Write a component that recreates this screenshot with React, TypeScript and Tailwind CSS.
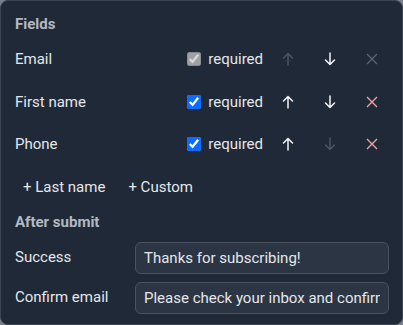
import React from "react";

interface Field {
  name: string;
  locked: boolean;
  canUp: boolean;
  canDown: boolean;
}

const fields: Field[] = [
  { name: "Email", locked: true, canUp: false, canDown: true },
  { name: "First name", locked: false, canUp: true, canDown: true },
  { name: "Phone", locked: false, canUp: true, canDown: false },
];

const Arrow: React.FC<{ up: boolean }> = ({ up }) => (
  <svg
    width="12"
    height="14"
    viewBox="0 0 12 14"
    fill="none"
    stroke="currentColor"
    strokeWidth="1.5"
    strokeLinecap="round"
    strokeLinejoin="round"
    style={up ? undefined : { transform: "rotate(180deg)" }}
  >
    <path d="M6 13 V1.5 M1.5 6 L6 1.5 L10.5 6" />
  </svg>
);

const App: React.FC = () => {
  return (
    <div
      className="w-[403px] h-[325px] bg-[#7a808b]"
      style={{ fontFamily: "Roboto, 'Liberation Sans', sans-serif" }}
    >
      <div className="h-full flex flex-col rounded-lg border border-[#3b4452] bg-[#1f2937] pl-[14px] pr-[13px] pt-[13px] text-[15px] text-[#e5e7eb]">
        <div className="h-5 leading-5 font-bold text-[#b3b9c2]">Fields</div>

        <div className="mt-[4px] flex flex-col">
          {fields.map((f) => (
            <div key={f.name} className="h-[42.5px] flex items-center">
              <span className="flex-1">{f.name}</span>
              <label className="flex items-center gap-[7px]">
                <input
                  type="checkbox"
                  checked
                  disabled={f.locked}
                  readOnly
                  className="w-[14px] h-[14px] m-0 accent-[#0b6cff]"
                />
                <span>required</span>
              </label>
              <div className="ml-2 flex gap-2">
                <button
                  className={`w-[34px] h-[30px] flex items-center justify-center ${
                    f.canUp ? "text-[#f3f4f6]" : "text-[#4b5563]"
                  }`}
                >
                  <Arrow up />
                </button>
                <button
                  className={`w-[34px] h-[30px] flex items-center justify-center ${
                    f.canDown ? "text-[#f3f4f6]" : "text-[#4b5563]"
                  }`}
                >
                  <Arrow up={false} />
                </button>
                <button
                  className={`w-[34px] h-[30px] flex items-center justify-center ${
                    f.locked ? "text-[#5b6370]" : "text-[#f0a3a3]"
                  }`}
                >
                  <svg width="12" height="12" viewBox="0 0 12 12" fill="none" stroke="currentColor" strokeWidth="1.4">
                    <path d="M1 1 L11 11 M11 1 L1 11" />
                  </svg>
                </button>
              </div>
            </div>
          ))}
        </div>

        <div className="mt-[7px] h-[30px] flex items-center gap-[7px]">
          <button className="px-2 h-full">+ Last name</button>
          <button className="px-2 h-full">+ Custom</button>
        </div>

        <div className="mt-[9px] h-5 leading-5 font-bold text-[#b3b9c2]">After submit</div>

        <div className="mt-[10px] flex flex-col gap-2">
          <div className="flex items-center">
            <span className="w-[120px]">Success</span>
            <input
              type="text"
              defaultValue="Thanks for subscribing!"
              className="flex-1 h-[32px] rounded-md border border-[#4a5361] bg-[#2b3544] px-2 text-[15px] text-[#e5e7eb] outline-none"
            />
          </div>
          <div className="flex items-center">
            <span className="w-[120px]">Confirm email</span>
            <input
              type="text"
              defaultValue="Please check your inbox and confirm your subscription."
              className="flex-1 h-[32px] rounded-md border border-[#4a5361] bg-[#2b3544] px-2 text-[15px] text-[#e5e7eb] outline-none"
            />
          </div>
        </div>
      </div>
    </div>
  );
};

export default App;
